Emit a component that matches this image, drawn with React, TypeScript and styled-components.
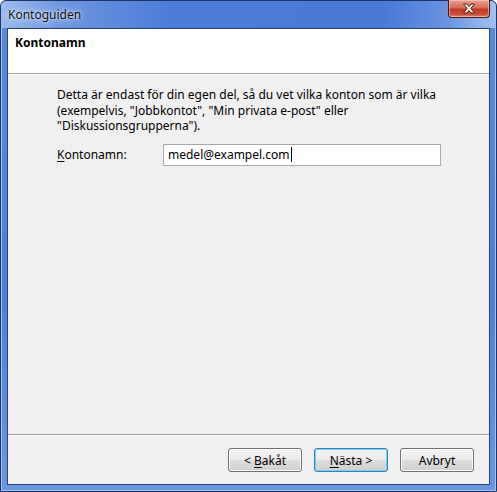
import styled, { createGlobalStyle, css } from "styled-components";

const GlobalStyle = createGlobalStyle`
    html, body {
        margin: 0;
        padding: 0;
        background: #ffffff;
    }
    body {
        font-family: "Noto Sans", "Open Sans", sans-serif;
        font-size: 12px;
    }
`

const Window = styled.div`
    box-sizing: border-box;
    width: 497px;
    height: 492px;
    display: flex;
    flex-direction: column;
    border: 1px solid #1d3564;
    border-radius: 6px 6px 0 0;
    padding: 0 6px 6px;
    background: linear-gradient(to bottom, #5b89db 0%, #4f7fd6 60%, #6b97df 100%);
    box-shadow: inset 0 0 0 1px #a9c3ef;
`

const TitleBar = styled.div`
    height: 27px;
    display: flex;
    align-items: flex-start;
    justify-content: space-between;
    margin: 0 -6px;
    padding: 0 6px 0 7px;
    background: linear-gradient(to right, #9bbaee 0%, #6e96e0 12%, #4b7bd8 35%, #4a7ad8 78%, #6a93df 90%, #a3c0f0 100%);
    border-radius: 6px 6px 0 0;
`

const Title = styled.span`
    line-height: 27px;
    color: #141414;
    font-size: 12px;
    text-shadow: 0 0 8px rgba(255, 255, 255, 0.9), 0 0 3px rgba(255, 255, 255, 0.8);
`

const CloseBtn = styled.div`
    box-sizing: border-box;
    width: 42px;
    height: 18px;
    margin-top: -1px;
    display: flex;
    align-items: center;
    justify-content: center;
    border: 1px solid #4a1a12;
    border-top: none;
    border-radius: 0 0 4px 4px;
    background: linear-gradient(to bottom, #e8a192 0%, #d66d58 45%, #bf3a22 55%, #c9503a 85%, #e0917e 100%);
    box-shadow: inset 0 0 0 1px rgba(255, 220, 210, 0.5);
`

const Client = styled.div`
    flex: 1;
    display: flex;
    flex-direction: column;
    border: 1px solid #2a4471;
    background: #f0f0f0;
`

const Header = styled.div`
    height: 45px;
    box-sizing: border-box;
    padding: 6px 7px 0;
    background: #ffffff;
    border-bottom: 1px solid #a0a0a0;
`

const HeaderTitle = styled.div`
    font-weight: 700;
    color: #000000;
    line-height: 16px;
`

const Body = styled.div`
    flex: 1;
    padding: 12px 48px 0 49px;
    border-top: 1px solid #ffffff;
`

const Intro = styled.p`
    margin: 0;
    line-height: 15.5px;
    color: #000000;
`

const FieldRow = styled.div`
    display: flex;
    align-items: center;
    margin-top: 10px;
`

const Label = styled.label`
    width: 106px;
    color: #000000;
`

const Key = styled.span`
    text-decoration: underline;
    text-underline-offset: 2px;
`

const TextBox = styled.div`
    box-sizing: border-box;
    width: 278px;
    height: 22px;
    display: flex;
    align-items: center;
    padding: 0 4px;
    background: #ffffff;
    border: 1px solid #abadb3;
    border-top-color: #a6a9b0;
    color: #000000;
`

const Caret = styled.span`
    display: inline-block;
    width: 1px;
    height: 15px;
    background: #000000;
    margin-left: 1px;
`

const Footer = styled.div`
    display: flex;
    justify-content: flex-end;
    gap: 12px;
    padding: 13px 15px 12px;
    border-top: 1px solid #a0a0a0;
    box-shadow: inset 0 1px 0 #ffffff;
`

const Button = styled.button<{ $default?: boolean }>`
    box-sizing: border-box;
    width: 74px;
    height: 24px;
    padding: 0;
    font-family: inherit;
    font-size: 12px;
    color: #000000;
    border: 1px solid #707070;
    border-radius: 3px;
    background: linear-gradient(to bottom, #f2f2f2 0%, #ebebeb 48%, #dddddd 52%, #cfcfcf 100%);
    box-shadow: inset 0 0 0 1px #fbfbfb;

    ${({ $default }) => $default && css`
        border-color: #3c7fb1;
        box-shadow: inset 0 0 0 1px #6fd3f7;
    `}
`

export default function App() {
    return (
        <>
            <GlobalStyle />
            <Window>
                <TitleBar>
                    <Title>Kontoguiden</Title>
                    <CloseBtn>
                        <svg width="14" height="11" viewBox="0 0 14 11">
                            <path d="M1.5 1 H5 L7 3.6 L9 1 H12.5 L8.8 5.5 L12.5 10 H9 L7 7.4 L5 10 H1.5 L5.2 5.5 Z" fill="#f4f4f4" stroke="#5a2418" strokeWidth="1" strokeLinejoin="round" />
                        </svg>
                    </CloseBtn>
                </TitleBar>
                <Client>
                    <Header>
                        <HeaderTitle>Kontonamn</HeaderTitle>
                    </Header>
                    <Body>
                        <Intro>
                            Detta är endast för din egen del, så du vet vilka konton som är vilka
                            (exempelvis, "Jobbkontot", "Min privata e-post" eller
                            "Diskussionsgrupperna").
                        </Intro>
                        <FieldRow>
                            <Label><Key>K</Key>ontonamn:</Label>
                            <TextBox>medel@exampel.com<Caret /></TextBox>
                        </FieldRow>
                    </Body>
                    <Footer>
                        <Button>&lt; <Key>B</Key>akåt</Button>
                        <Button $default>
                            <Key>N</Key>ästa &gt;
                        </Button>
                        <Button>Avbryt</Button>
                    </Footer>
                </Client>
            </Window>
        </>
    )
}
